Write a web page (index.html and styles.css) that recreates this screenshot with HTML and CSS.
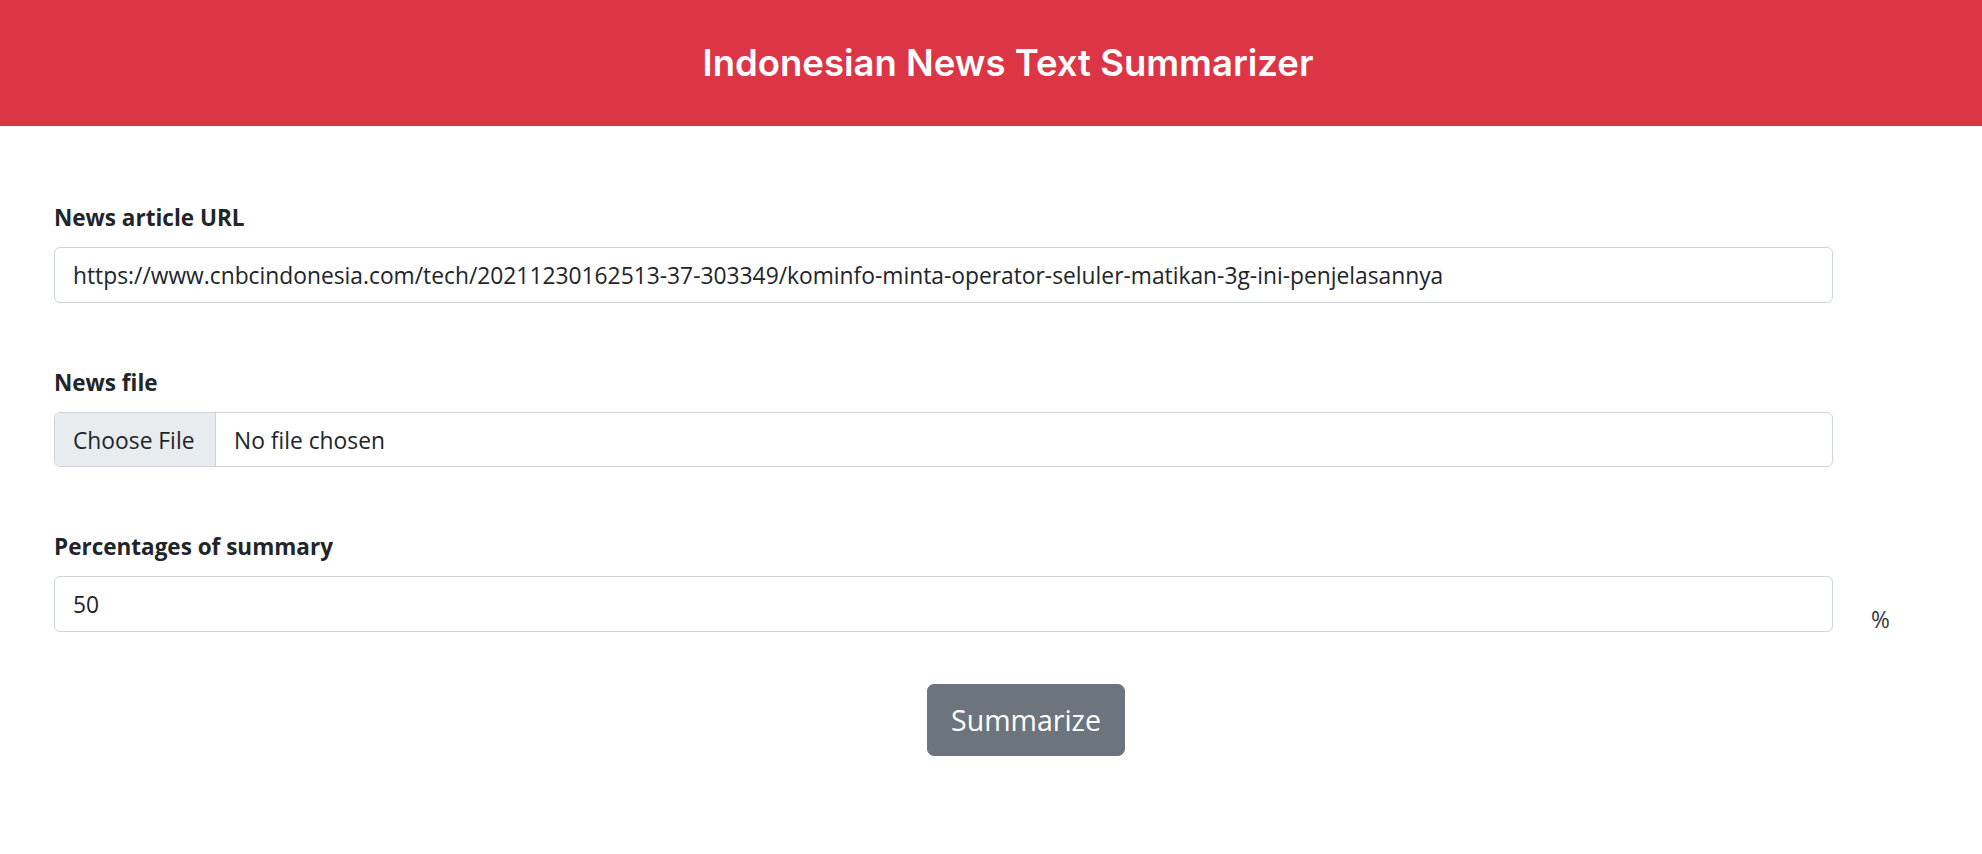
FILE: index.html
```
<!DOCTYPE html>
<html lang="en">
<head>
<meta charset="utf-8">
<title>Indonesian News Text Summarizer</title>
<link rel="stylesheet" href="styles.css">
</head>
<body>
<header class="topbar">
  <h1 class="title">Indonesian News Text Summarizer</h1>
</header>
<main class="page">
  <form class="form">
    <div class="group">
      <label class="label">News article URL</label>
      <div class="row">
        <div class="control">https://www.cnbcindonesia.com/tech/20211230162513-37-303349/kominfo-minta-operator-seluler-matikan-3g-ini-penjelasannya</div>
      </div>
    </div>
    <div class="group">
      <label class="label">News file</label>
      <div class="row">
        <div class="control file">
          <span class="file-btn">Choose File</span>
          <span class="file-name">No file chosen</span>
        </div>
      </div>
    </div>
    <div class="group last">
      <label class="label">Percentages of summary</label>
      <div class="row">
        <div class="control">50</div>
        <span class="unit">%</span>
      </div>
    </div>
    <div class="actions">
      <button type="button" class="btn">Summarize</button>
    </div>
  </form>
</main>
</body>
</html>
```
FILE: styles.css
```
* { box-sizing: border-box; }
html, body { margin: 0; padding: 0; background: #fff; }
body {
  font-family: "Open Sans", "Noto Sans", sans-serif;
  color: #212529;
}
.topbar {
  height: 126px;
  background: #dc3545;
  display: flex;
  align-items: center;
  justify-content: center;
  padding-left: 34px;
  padding-bottom: 1px;
}
.title {
  margin: 0;
  font-family: Inter, sans-serif;
  font-weight: 600;
  font-size: 36.5px;
  line-height: 44px;
  color: #fff;
}
.page {
  padding: 75px 0 0 54px;
}
.form { display: flex; flex-direction: column; }
.group { display: flex; flex-direction: column; margin-bottom: 63px; }
.group.last { margin-bottom: 46px; }
.label {
  font-size: 22.5px;
  font-weight: 700;
  line-height: 33.75px;
  margin-bottom: 12.3px;
}
.row { display: flex; align-items: flex-start; gap: 38px; }
.control {
  width: 1779px;
  height: 55.5px;
  border: 1px solid #ced4da;
  border-radius: 6px;
  padding: 3px 18px 0;
  font-size: 22.8px;
  line-height: 50.5px;
  white-space: nowrap;
  overflow: hidden;
  color: #212529;
}
.control.file { display: flex; padding: 0; line-height: 50.5px; }
.file-btn {
  background: #e9ecef;
  border-right: 1px solid #ced4da;
  padding: 3px 18px 0;
  width: 161px;
  border-radius: 5px 0 0 5px;
}
.file-name { padding: 3px 0 0 18px; }
.unit {
  font-size: 22.8px;
  line-height: 36px;
  padding-top: 26px;
  color: #343a40;
}
.actions {
  display: flex;
  justify-content: center;
  padding-left: 16px;
}
.btn {
  font-family: "Open Sans", "Noto Sans", sans-serif;
  font-size: 28.5px;
  line-height: 45px;
  height: 72px;
  width: 198px;
  padding: 0;
  border: 1.5px solid #6c757d;
  border-radius: 7px;
  background: #6c757d;
  color: #fff;
  cursor: pointer;
}
```
